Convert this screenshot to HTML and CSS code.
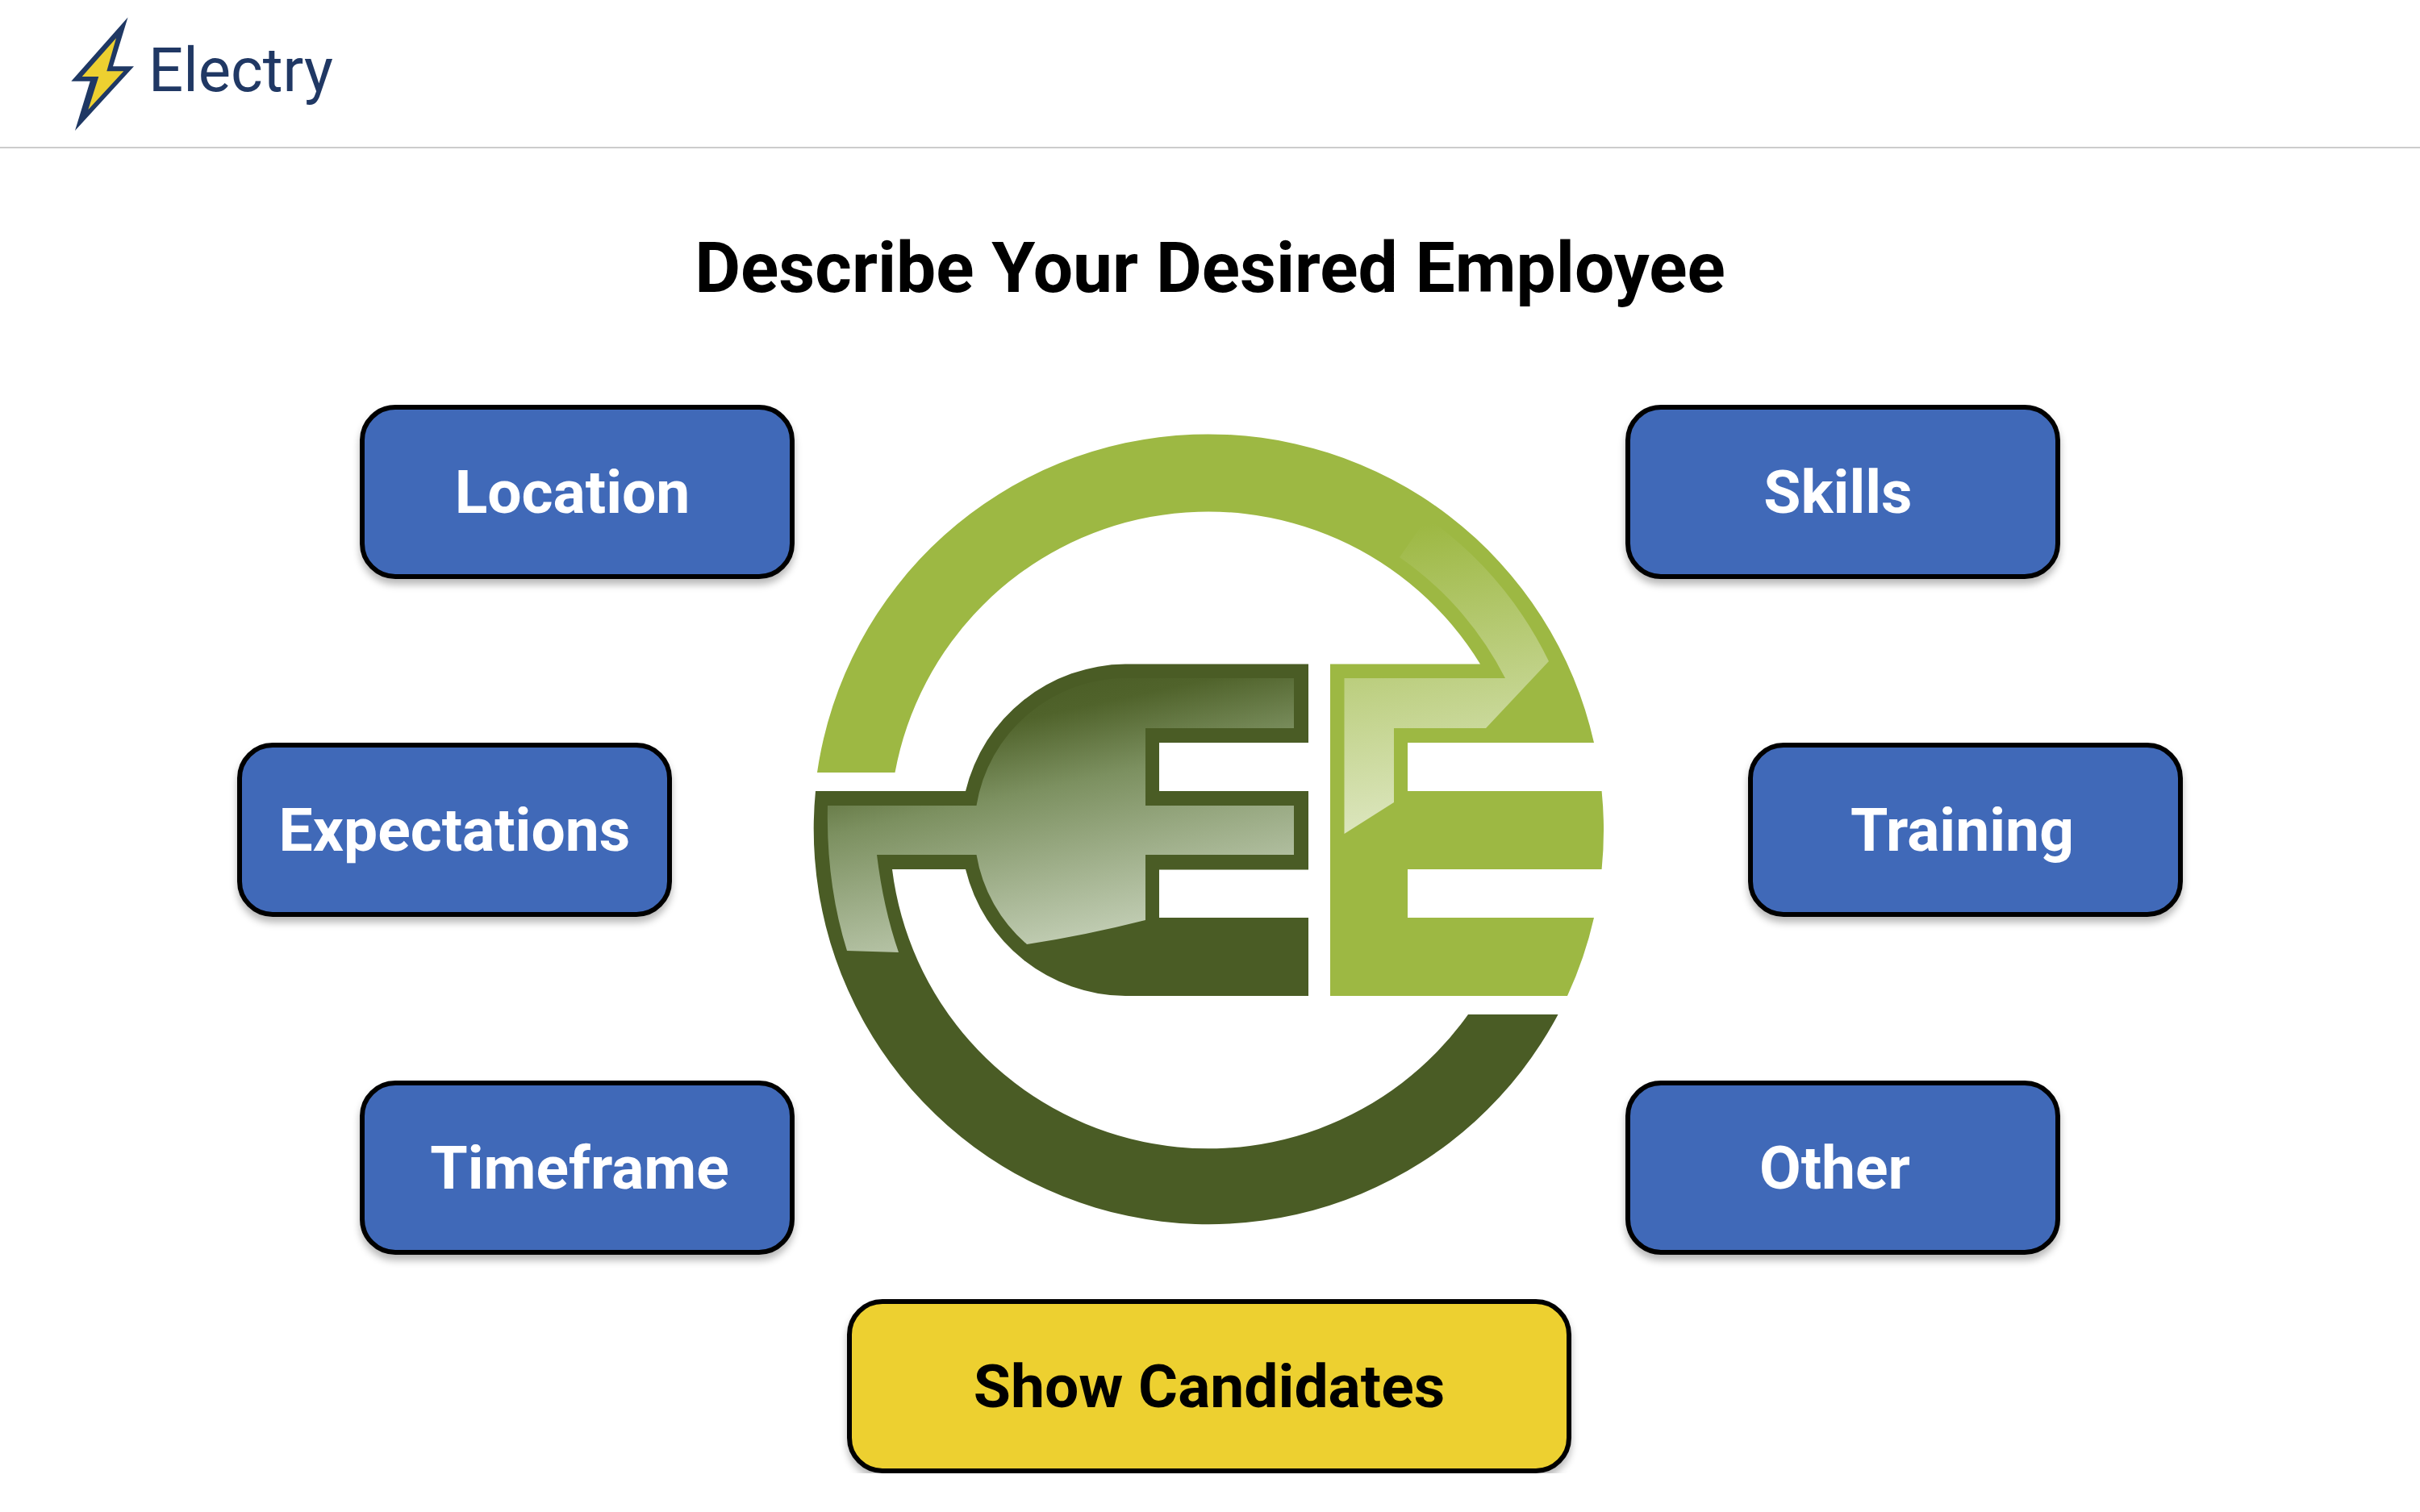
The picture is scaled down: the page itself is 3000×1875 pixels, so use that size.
FILE: index.html
```html
<!DOCTYPE html>
<html lang="en">
<head>
<meta charset="utf-8">
<title>Electry</title>
<link rel="stylesheet" href="styles.css">
</head>
<body>
<header class="topbar">
  <svg class="bolt" viewBox="80 15 95 155" aria-hidden="true">
    <polygon fill="#1f3864" points="158.5,21.5 140,82.3 166,82.3 93,162 111.7,100.7 88.3,100.7"/>
    <polygon fill="#edd030" points="144,47.3 132.3,88.3 153.3,88.3 109.3,136 122.3,95 101.7,95"/>
  </svg>
  <span class="brand">Electry</span>
</header>
<main class="page">
  <h1 class="title">Describe Your Desired Employee</h1>
  <div class="stage">
    <div class="col col-left">
      <button class="btn btn-blue inset btn-location">Location</button>
      <button class="btn btn-blue">Expectations</button>
      <button class="btn btn-blue inset btn-timeframe">Timeframe</button>
    </div>
    <svg class="logo" viewBox="1000 530 1000 1000" aria-hidden="true">
      <defs>
        <linearGradient id="plugGlow" gradientUnits="userSpaceOnUse" x1="1280" y1="838" x2="1350" y2="1160">
          <stop offset="0" stop-color="#4a5c25"/>
          <stop offset="0.15" stop-color="#50632b"/>
          <stop offset="0.42" stop-color="#7c9060"/>
          <stop offset="1" stop-color="#c0ccb2"/>
        </linearGradient>
        <linearGradient id="leafGlow" gradientUnits="userSpaceOnUse" x1="1700" y1="660" x2="1760" y2="1040">
          <stop offset="0" stop-color="#9db843"/>
          <stop offset="1" stop-color="#dfe8c4"/>
        </linearGradient>
      </defs>
      <path fill="#9db843" d="M1013 957 A490 490 0 0 1 1976 920 H1745 V980 H1985.6 A490 490 0 0 1 1985.6 1077 H1745 V1137 H1976 A490 490 0 0 1 1943 1234 H1649 V822.5 H1835 A395 395 0 0 0 1109.5 957 Z"/>
      <path fill="#4a5c25" d="M1011 980 A490 490 0 0 0 1931.5 1257 H1820 A395 395 0 0 1 1106 1077 H1197 A205.75 205.75 0 0 0 1395 1234 H1622 V1137 H1437 V1077.5 H1622 V980 H1437 V920 H1622 V822.5 H1395 A205.75 205.75 0 0 0 1197 980 Z"/>
      <path fill="url(#plugGlow)" d="M1026 998 H1210.5 A187.75 187.75 0 0 1 1395 840 H1604 V902 H1420 V998 H1604 V1059 H1420 V1140 Q1345 1159 1273 1170 A187.75 187.75 0 0 1 1210.5 1059 H1087 Q1095 1125 1114 1180 L1050 1178 Q1024 1095 1026 998 Z"/>
      <path fill="url(#leafGlow)" d="M1666.5 840 H1866 A413 413 0 0 0 1735 690 L1769 641 A472 472 0 0 1 1920 819 L1842 902 H1728 V994 L1666.5 1033 Z"/>
    </svg>
    <div class="col col-right">
      <button class="btn btn-blue btn-skills">Skills</button>
      <button class="btn btn-blue inset btn-training">Training</button>
      <button class="btn btn-blue btn-other">Other</button>
    </div>
  </div>
  <button class="btn btn-yellow">Show Candidates</button>
</main>
</body>
</html>
```

FILE: styles.css
```css
* { box-sizing: border-box; }
html, body { margin: 0; padding: 0; background: #fff; }
body { font-family: Roboto, "Liberation Sans", sans-serif; color: #000; }

.topbar {
  height: 184px;
  border-bottom: 2px solid #ccc;
  display: flex;
  align-items: flex-start;
  padding-left: 80px;
}
.bolt { width: 95px; height: 155px; margin-top: 15px; flex: none; }
.brand {
  font-size: 76px;
  line-height: 88px;
  color: #203864;
  margin-left: 9px;
  margin-top: 43px;
}

.page { display: flex; flex-direction: column; align-items: center; }
.title {
  margin: 0;
  padding-top: 98px;
  height: 318px;
  font-size: 87.5px;
  line-height: 100px;
  font-weight: 700;
  text-align: center;
}

.stage {
  width: 100%;
  display: grid;
  grid-template-columns: 706px 1000px 1fr;
  padding-left: 294px;
}
.col { display: flex; flex-direction: column; gap: 203px; align-items: flex-start; }
.col-right { padding-left: 15px; }
.inset { margin-left: 152px; }
.logo { width: 1000px; height: 1000px; margin-top: 29px; display: block; }

.btn {
  display: block;
  width: 539px;
  height: 216px;
  border: 6px solid #000;
  border-radius: 44px;
  font-family: Roboto, "Liberation Sans", sans-serif;
  font-size: 75px;
  font-weight: 700;
  padding: 0;
  box-shadow: 0 7px 10px rgba(0,0,0,.28);
}
.btn-blue { background: #4069b8; color: #fff; }
.btn-location { padding-right: 12px; }
.btn-timeframe { padding-left: 6px; }
.btn-skills { padding-right: 12px; }
.btn-training { padding-right: 8px; }
.btn-other { padding-right: 20px; }
.btn-yellow {
  width: 898px;
  margin-top: 55px;
  margin-right: 2px;
  background: #edd030;
  color: #000;
}
```
